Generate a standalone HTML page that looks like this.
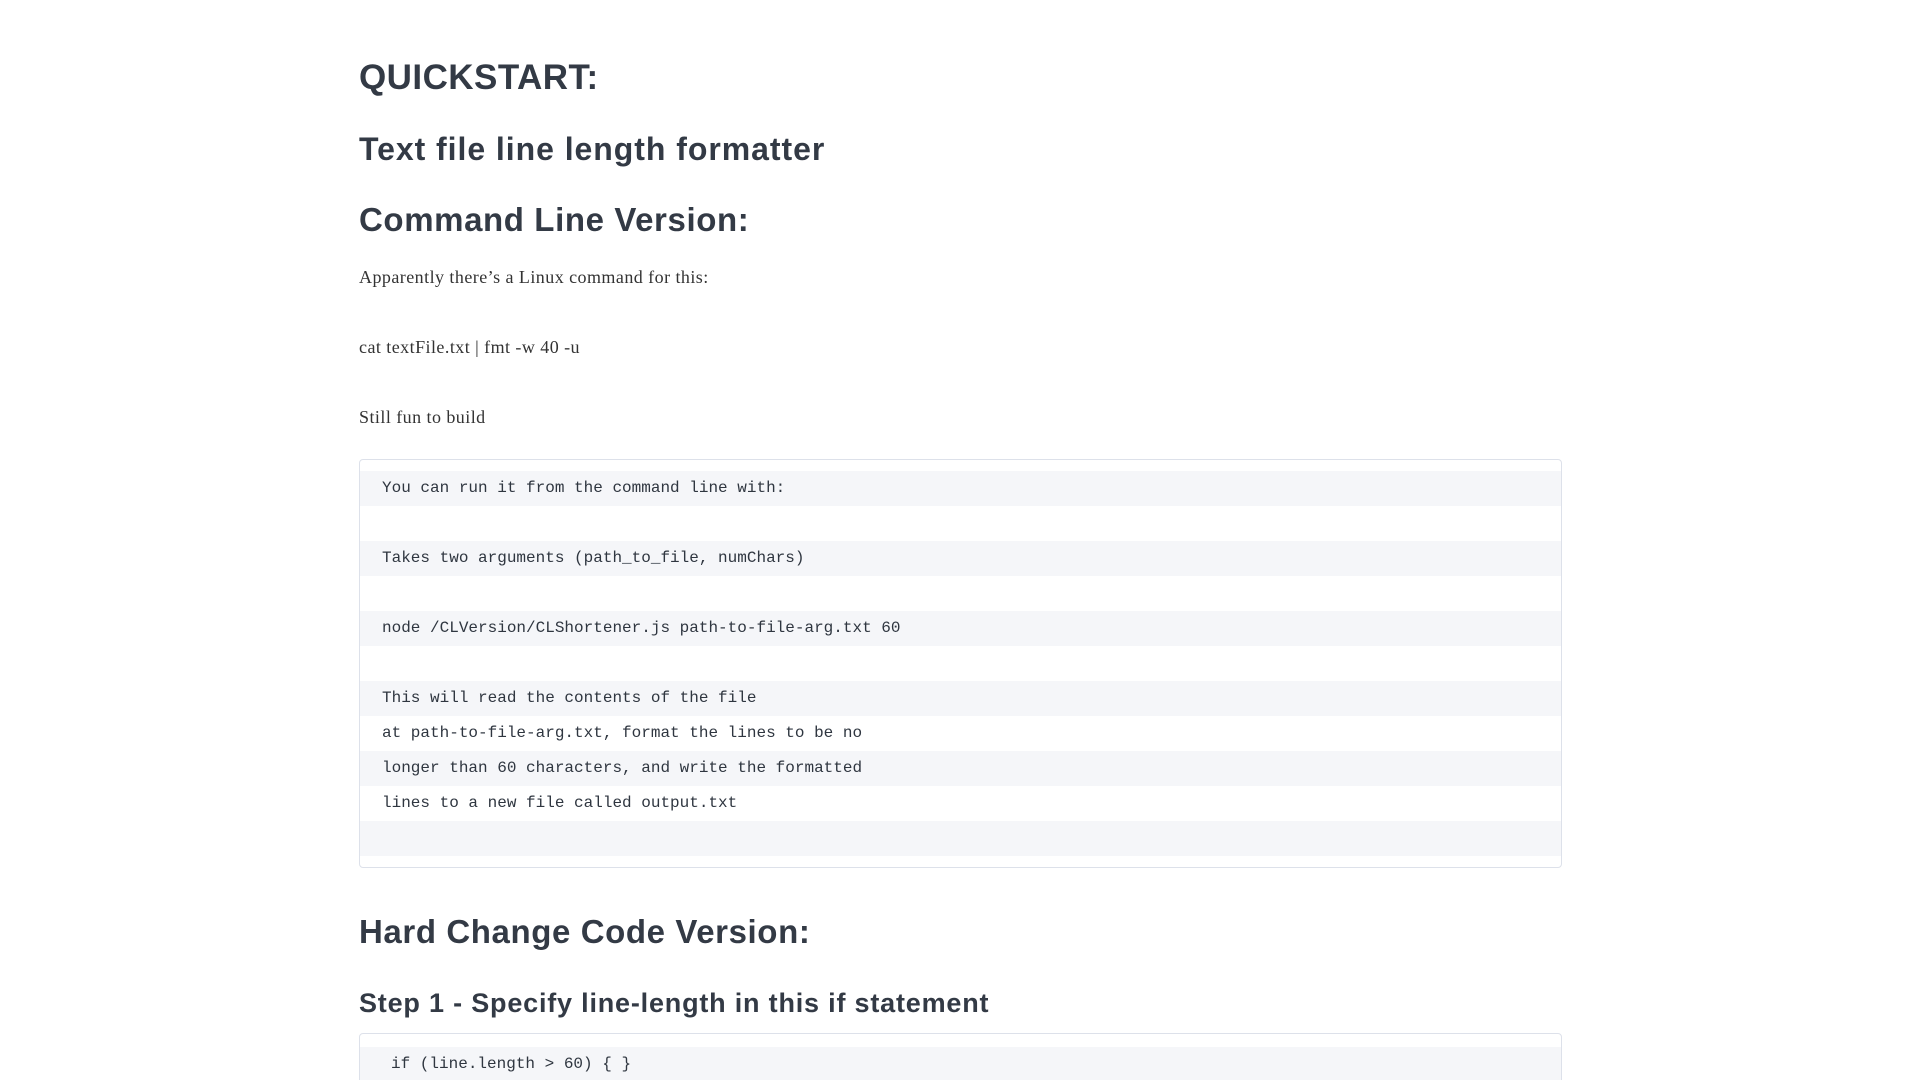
<!DOCTYPE html>
<html style="overflow:hidden;height:1080px"><head><meta charset="utf-8"><style>
body{margin:0;width:1920px;height:1080px;background:#fff;position:relative;overflow:hidden}
.h{position:absolute;left:359px;margin:0;font-family:"Liberation Sans",sans-serif;font-weight:bold;color:#333a45;line-height:1;white-space:nowrap}
.p{position:absolute;left:359px;margin:0;font-family:"Liberation Serif",serif;font-size:18px;line-height:18px;color:#333;white-space:nowrap;letter-spacing:0.45px}
.box{position:absolute;left:359px;width:1203px;border:1px solid #dde1ea;border-radius:4px;padding:11px 0 0 0;box-sizing:border-box}
.r{height:35px;line-height:35px;font-family:"Liberation Mono",monospace;font-size:16px;color:#2f3640;padding-left:22px;white-space:pre}
.s{background:#f5f6f9}
</style></head><body>
<div class="h" style="top:60px;font-size:35px;letter-spacing:0.45px">QUICKSTART:</div>
<div class="h" style="top:133px;font-size:32px;letter-spacing:0.95px">Text file line length formatter</div>
<div class="h" style="top:203px;font-size:33px;letter-spacing:0.6px">Command Line Version:</div>
<div class="p" style="top:268px">Apparently there’s a Linux command for this:</div>
<div class="p" style="top:338px">cat textFile.txt | fmt -w 40 -u</div>
<div class="p" style="top:408px">Still fun to build</div>
<div class="box" style="top:459px;height:409px">
<div class="r s">You can run it from the command line with:</div>
<div class="r"> </div>
<div class="r s">Takes two arguments (path_to_file, numChars)</div>
<div class="r"> </div>
<div class="r s">node /CLVersion/CLShortener.js path-to-file-arg.txt 60</div>
<div class="r"> </div>
<div class="r s">This will read the contents of the file</div>
<div class="r">at path-to-file-arg.txt, format the lines to be no</div>
<div class="r s">longer than 60 characters, and write the formatted</div>
<div class="r">lines to a new file called output.txt</div>
<div class="r s"> </div>
</div>
<div class="h" style="top:915px;font-size:33px;letter-spacing:0.6px">Hard Change Code Version:</div>
<div class="h" style="top:990px;font-size:27px;letter-spacing:0.8px">Step 1 - Specify line-length in this if statement</div>
<div class="box" style="top:1033px;height:60px;padding-top:13px">
<div class="r s" style="padding-left:31px">if (line.length &gt; 60) { }</div>
</div>
</body></html>
